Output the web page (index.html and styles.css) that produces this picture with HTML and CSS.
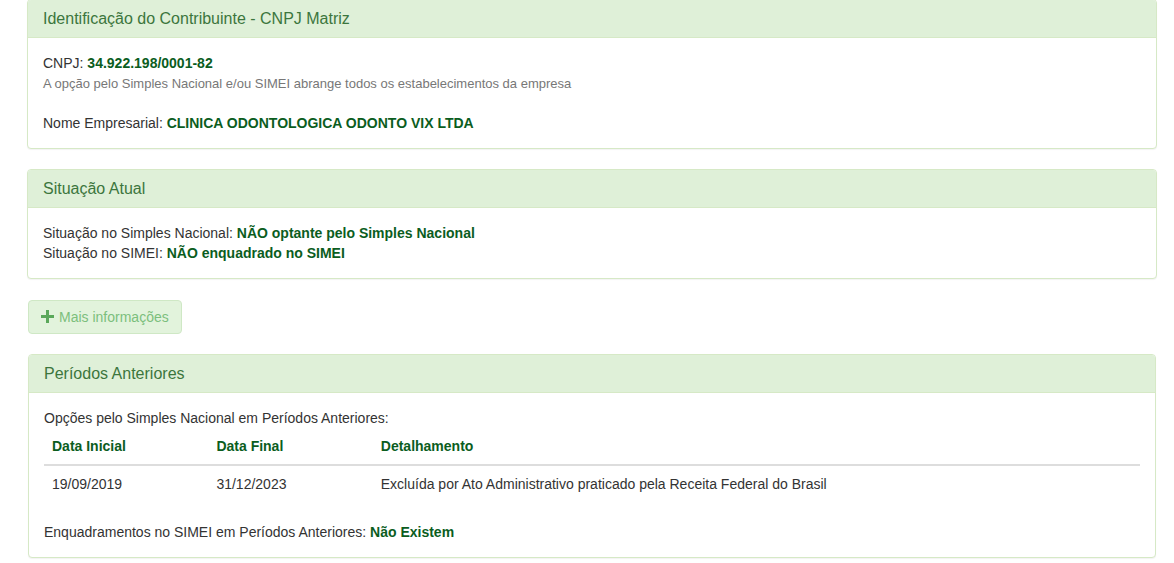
FILE: index.html
```html
<!DOCTYPE html>
<html lang="pt-BR">
<head>
    <meta charset="UTF-8">
    <title>Consulta Optantes</title>
    <link rel="stylesheet" href="styles.css">
</head>
<body>
    <div class="page">
        <div class="panel">
            <div class="panel-heading">Identificação do Contribuinte - CNPJ Matriz</div>
            <div class="panel-body">
                CNPJ: <span class="spanValorVerde">34.922.198/0001-82</span><br>
                <small class="text-muted">A opção pelo Simples Nacional e/ou SIMEI abrange todos os estabelecimentos da empresa</small><br>
                <br>
                Nome Empresarial: <span class="spanValorVerde">CLINICA ODONTOLOGICA ODONTO VIX LTDA</span>
            </div>
        </div>

        <div class="panel">
            <div class="panel-heading">Situação Atual</div>
            <div class="panel-body">
                Situação no Simples Nacional: <span class="spanValorVerde">NÃO optante pelo Simples Nacional</span><br>
                Situação no SIMEI: <span class="spanValorVerde">NÃO enquadrado no SIMEI</span>
            </div>
        </div>

        <button class="btn-mais" type="button">
            <svg class="icon-plus" width="13" height="13" viewBox="0 0 13 13"><path d="M5 0h3v5h5v3H8v5H5V8H0V5h5z" fill="#5aa85a"/></svg>
            Mais informações
        </button>

        <div class="panel panel-inset">
            <div class="panel-heading">Períodos Anteriores</div>
            <div class="panel-body">
                Opções pelo Simples Nacional em Períodos Anteriores:
                <table class="table">
                    <thead>
                        <tr>
                            <th class="col-data">Data Inicial</th>
                            <th class="col-data">Data Final</th>
                            <th>Detalhamento</th>
                        </tr>
                    </thead>
                    <tbody>
                        <tr>
                            <td>19/09/2019</td>
                            <td>31/12/2023</td>
                            <td>Excluída por Ato Administrativo praticado pela Receita Federal do Brasil</td>
                        </tr>
                    </tbody>
                </table>
                Enquadramentos no SIMEI em Períodos Anteriores: <span class="spanValorVerde">Não Existem</span>
            </div>
        </div>
    </div>
</body>
</html>
```

FILE: styles.css
```css
body {
    margin: 0;
    font-family: "Liberation Sans", Arial, Helvetica, sans-serif;
    font-size: 14px;
    line-height: 20px;
    color: #333;
    background-color: #fff;
}
.page {
    width: 1130px;
    margin-left: 27px;
    margin-top: -1px;
}
.panel {
    margin-bottom: 20px;
    background-color: #fff;
    border: 1px solid #d6e9c6;
    border-radius: 4px;
    box-shadow: 0 1px 1px rgba(0, 0, 0, 0.05);
}
.panel-inset {
    margin-left: 1px;
    margin-right: 1px;
}
.panel-heading {
    padding: 9px 15px 8px;
    font-size: 16px;
    line-height: 20px;
    color: #3c763d;
    background-color: #dff0d8;
    border-bottom: 1px solid #d6e9c6;
    border-radius: 3px 3px 0 0;
}
.panel-body {
    padding: 15px;
}
.spanValorVerde {
    font-weight: bold;
    color: #0b5d1e;
}
.text-muted {
    font-size: 13px;
    line-height: 1;
    color: #777;
}
.btn-mais {
    display: flex;
    align-items: center;
    gap: 5px;
    width: fit-content;
    margin: 21px 0 20px 1px;
    padding: 6px 12px;
    height: 34px;
    font-family: inherit;
    font-size: 14px;
    color: #7cbf7c;
    background-color: #e2f3dc;
    border: 1px solid #cfe8c5;
    border-radius: 4px;
    cursor: not-allowed;
}
.icon-plus {
    margin-top: -1px;
}
.table {
    width: 100%;
    margin-bottom: 20px;
    border-collapse: collapse;
    border-spacing: 0;
}
.table th, .table td {
    padding: 8px;
    line-height: 20px;
    text-align: left;
    vertical-align: top;
}
.table th {
    font-weight: bold;
    color: #0b5d1e;
    border-bottom: 2px solid #ddd;
}
.col-data {
    width: 15%;
}
```
